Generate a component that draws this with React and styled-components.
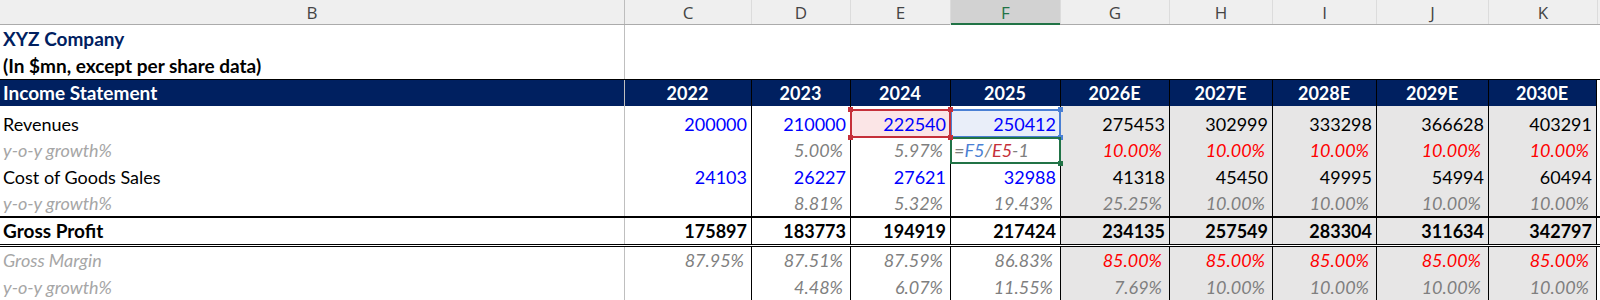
import React from 'react';
import styled, { createGlobalStyle, css } from 'styled-components';

const GlobalStyle = createGlobalStyle`
  html, body { margin: 0; padding: 0; background: #fff; }
  body { font-family: Lato, "Liberation Sans", sans-serif; }
`;

// column widths B..K, then a small filler to the window edge
const WIDTHS = [624, 127, 99, 100, 110, 109, 103, 104, 112, 109];
const GRID = WIDTHS.map((w) => `${w}px`).join(' ') + ' 1fr';
const LETTERS = ['B', 'C', 'D', 'E', 'F', 'G', 'H', 'I', 'J', 'K'];
const YEARS = ['2022', '2023', '2024', '2025', '2026E', '2027E', '2028E', '2029E', '2030E'];

const NAVY = '#002060';
const FORECAST = '#e7e6e6';

const REF = {
  red: { line: '#c5303a', fill: '#fbe5e6', z: 3 },
  blue: { line: '#4a7fd4', fill: '#e9eef9', z: 2 },
  green: { line: '#217346', fill: 'transparent', z: 2 },
};

const Sheet = styled.div`
  width: 1600px;
  height: 300px;
  overflow: hidden;
  background: #fff;
`;

const HeaderRow = styled.div`
  display: grid;
  grid-template-columns: ${GRID};
  height: 25px;
  box-sizing: border-box;
  background: #efefef;
  border-bottom: 1px solid #ababab;
`;

const ColHead = styled.div`
  display: flex;
  align-items: center;
  justify-content: center;
  font-family: "Open Sans", "Noto Sans", sans-serif;
  font-size: 17px;
  color: #444;
  box-sizing: border-box;
  border-left: 1px solid ${(p) => (p.$freeze ? '#bdbdbd' : '#dcdcdc')};
  ${(p) => p.$first && 'border-left: none;'}
  ${(p) =>
    p.$active &&
    css`
      background: #d2d2d2;
      color: #217346;
      box-shadow: inset 0 -2px 0 #217346;
      margin-bottom: -1px;
    `}
`;

const Row = styled.div`
  display: grid;
  grid-template-columns: ${GRID};
  height: ${(p) => p.$h}px;
  box-sizing: border-box;
  ${(p) => p.$top && css`border-top: ${p.$top};`}
  ${(p) => p.$bottom && css`border-bottom: ${p.$bottom};`}
`;

const edges = (p) => {
  if (p.$col === 1) return css`border-left: 1px solid #bfbfbf;`;
  if (!p.$table || p.$col < 2) return '';
  return css`
    border-left: 1px solid #000;
    ${p.$col === 9 && 'border-right: 1px solid #000;'}
  `;
};

const Cell = styled.div`
  position: relative;
  display: flex;
  align-items: flex-end;
  box-sizing: border-box;
  padding: 0 4px 3px 3px;
  font-size: 18px;
  line-height: 20px;
  white-space: nowrap;
  background: ${(p) => p.$bg || 'transparent'};
  ${edges}
`;

const TitleText = styled.span`
  font-size: 19px;
  font-weight: 700;
  color: ${(p) => (p.$navy ? NAVY : '#000')};
`;

const LABEL_TONES = {
  plain: css`color: #000;`,
  muted: css`color: #a6a6a6; font-style: italic;`,
  total: css`color: #000; font-weight: 700; font-size: 19px;`,
  band: css`color: #fff; font-weight: 700; font-size: 19px;`,
};

const Label = styled.span`
  ${(p) => LABEL_TONES[p.$tone]}
`;

const YearText = styled.span`
  flex: 1;
  text-align: center;
  color: #fff;
  font-weight: 700;
`;

const VALUE_TONES = {
  input: css`color: #0000ff;`,
  calc: css`color: #000;`,
  total: css`color: #000; font-weight: 700;`,
  pct: css`color: #7f7f7f; font-style: italic; padding-right: 3px;`,
  assume: css`color: #ff0000; font-style: italic; padding-right: 3px;`,
};

const Value = styled.span`
  position: relative;
  z-index: 4;
  margin-left: auto;
  ${(p) => VALUE_TONES[p.$tone]}
`;

const Formula = styled.span`
  position: relative;
  z-index: 4;
  font-style: italic;
  color: #7f7f7f;
`;

const Ref = styled.span`
  color: ${(p) => REF[p.$c].line};
`;

const RefBox = styled.span`
  position: absolute;
  left: -1px;
  right: -1px;
  top: ${(p) => p.$top}px;
  bottom: ${(p) => p.$bottom}px;
  border: 2px solid ${(p) => REF[p.$c].line};
  background: ${(p) => REF[p.$c].fill};
  z-index: ${(p) => REF[p.$c].z};
  pointer-events: none;
`;

const Handle = styled.span`
  position: absolute;
  width: 5px;
  height: 5px;
  background: ${(p) => REF[p.$c].line};
  ${(p) => (p.$y === 'top' ? 'top: -4px;' : 'bottom: -4px;')}
  ${(p) => (p.$x === 'left' ? 'left: -4px;' : 'right: -4px;')}
`;

const BOXES = {
  red: { top: 3, bottom: -1, handles: [['top', 'left'], ['top', 'right'], ['bottom', 'left'], ['bottom', 'right']] },
  blue: { top: 3, bottom: -1, handles: [['top', 'right'], ['bottom', 'right']] },
  green: { top: 0, bottom: -1, handles: [['bottom', 'right']] },
};

const Selection = ({ c }) => {
  const b = BOXES[c];
  return (
    <RefBox $c={c} $top={b.top} $bottom={b.bottom}>
      {b.handles.map(([y, x]) => (
        <Handle key={y + x} $c={c} $y={y} $x={x} />
      ))}
    </RefBox>
  );
};

// value tone per column: 4 actuals then 5 forecasts
const split = (list, actual, forecast) =>
  list.map((v, i) => (v === null ? null : { v, tone: i < 4 ? actual : forecast }));

const ROWS = [
  {
    label: 'Revenues',
    tone: 'plain',
    h: 31,
    cells: split(['200000', '210000', '222540', '250412', '275453', '302999', '333298', '366628', '403291'], 'input', 'calc'),
    refs: { 2: 'red', 3: 'blue' },
  },
  {
    label: 'y-o-y growth%',
    tone: 'muted',
    h: 26,
    cells: split([null, '5.00%', '5.97%', 'formula', '10.00%', '10.00%', '10.00%', '10.00%', '10.00%'], 'pct', 'assume'),
    refs: { 3: 'green' },
  },
  {
    label: 'Cost of Goods Sales',
    tone: 'plain',
    h: 27,
    cells: split(['24103', '26227', '27621', '32988', '41318', '45450', '49995', '54994', '60494'], 'input', 'calc'),
  },
  {
    label: 'y-o-y growth%',
    tone: 'muted',
    h: 26,
    cells: split([null, '8.81%', '5.32%', '19.43%', '25.25%', '10.00%', '10.00%', '10.00%', '10.00%'], 'pct', 'pct'),
  },
  {
    label: 'Gross Profit',
    tone: 'total',
    h: 31,
    top: '2px solid #000',
    bottom: '3px double #000',
    cells: split(['175897', '183773', '194919', '217424', '234135', '257549', '283304', '311634', '342797'], 'total', 'total'),
  },
  {
    label: 'Gross Margin',
    tone: 'muted',
    h: 26,
    cells: split(['87.95%', '87.51%', '87.59%', '86.83%', '85.00%', '85.00%', '85.00%', '85.00%', '85.00%'], 'pct', 'assume'),
  },
  {
    label: 'y-o-y growth%',
    tone: 'muted',
    h: 27,
    cells: split([null, '4.48%', '6.07%', '11.55%', '7.69%', '10.00%', '10.00%', '10.00%', '10.00%'], 'pct', 'pct'),
  },
];

const DataRow = ({ row }) => (
  <Row $h={row.h} $top={row.top} $bottom={row.bottom}>
    <Cell $col={0} $table>
      <Label $tone={row.tone}>{row.label}</Label>
    </Cell>
    {row.cells.map((cell, i) => {
      const col = i + 1;
      const ref = row.refs && row.refs[i];
      return (
        <Cell key={col} $col={col} $table $bg={i >= 4 ? FORECAST : undefined}>
          {ref && <Selection c={ref} />}
          {cell && cell.v === 'formula' ? (
            <Formula>
              =<Ref $c="blue">F5</Ref>/<Ref $c="red">E5</Ref>-1
            </Formula>
          ) : (
            cell && <Value $tone={cell.tone}>{cell.v}</Value>
          )}
        </Cell>
      );
    })}
    <Cell />
  </Row>
);

export default function App() {
  return (
    <Sheet>
      <GlobalStyle />
      <HeaderRow>
        {LETTERS.map((l, i) => (
          <ColHead key={l} $first={i === 0} $freeze={i === 1} $active={l === 'F'}>
            {l}
          </ColHead>
        ))}
        <ColHead />
      </HeaderRow>

      <Row $h={27}>
        <Cell $col={0}>
          <TitleText $navy>XYZ Company</TitleText>
        </Cell>
        {YEARS.map((y, i) => (
          <Cell key={y} $col={i + 1} />
        ))}
        <Cell />
      </Row>
      <Row $h={27}>
        <Cell $col={0}>
          <TitleText>(In $mn, except per share data)</TitleText>
        </Cell>
        {YEARS.map((y, i) => (
          <Cell key={y} $col={i + 1} />
        ))}
        <Cell />
      </Row>

      <Row $h={27} $top="1px solid #000">
        <Cell $col={0} $table $bg={NAVY}>
          <Label $tone="band">Income Statement</Label>
        </Cell>
        {YEARS.map((y, i) => (
          <Cell key={y} $col={i + 1} $table $bg={NAVY}>
            <YearText>{y}</YearText>
          </Cell>
        ))}
        <Cell />
      </Row>

      {ROWS.map((row, i) => (
        <DataRow key={i} row={row} />
      ))}
    </Sheet>
  );
}
